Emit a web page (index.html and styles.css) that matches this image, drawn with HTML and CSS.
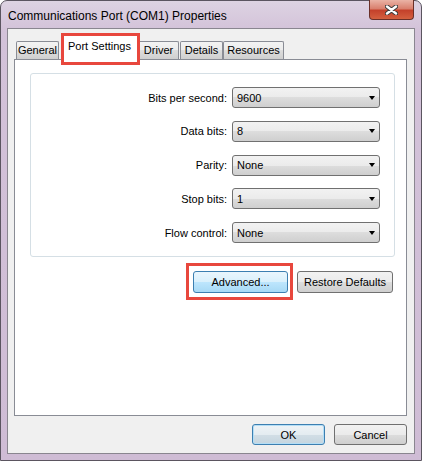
FILE: index.html
```html
<!doctype html>
<html>
<head>
<meta charset="utf-8">
<title>Communications Port (COM1) Properties</title>
<link rel="stylesheet" href="styles.css">
</head>
<body>
<div class="window">
	<div class="titlebar">
		<span class="title">Communications Port (COM1) Properties</span>
		<span class="close">
			<svg width="13" height="10" viewBox="0 0 13 10">
				<path d="M2 1.5L11 8.5M11 1.5L2 8.5" stroke="#3b3b3b" stroke-width="4.4" stroke-linecap="round"/>
				<path d="M2 1.5L11 8.5M11 1.5L2 8.5" stroke="#fff" stroke-width="2.4" stroke-linecap="round"/>
			</svg>
		</span>
	</div>
	<div class="client">
		<div class="tabs">
			<span class="tab tab-general">General</span>
			<span class="tab tab-active marked">Port Settings</span>
			<span class="tab tab-driver">Driver</span>
			<span class="tab tab-details">Details</span>
			<span class="tab tab-resources">Resources</span>
		</div>
		<div class="panel">
			<div class="group">
				<div class="row"><label>Bits per second:</label><div class="combo"><span>9600</span><i class="arrow"></i></div></div>
				<div class="row"><label>Data bits:</label><div class="combo"><span>8</span><i class="arrow"></i></div></div>
				<div class="row"><label>Parity:</label><div class="combo"><span>None</span><i class="arrow"></i></div></div>
				<div class="row"><label>Stop bits:</label><div class="combo"><span>1</span><i class="arrow"></i></div></div>
				<div class="row"><label>Flow control:</label><div class="combo"><span>None</span><i class="arrow"></i></div></div>
			</div>
			<div class="actions">
				<span class="btn btn-hot btn-advanced marked">Advanced...</span>
				<span class="btn btn-restore">Restore Defaults</span>
			</div>
		</div>
		<div class="footer">
			<span class="btn btn-default btn-small">OK</span>
			<span class="btn btn-small">Cancel</span>
		</div>
	</div>
</div>
</body>
</html>
```
FILE: styles.css
```css
body{margin:0;background:#fff;font-family:"Liberation Sans",Arial,sans-serif;font-size:11px;color:#000;}
.window{width:422px;height:461px;box-sizing:border-box;display:flex;flex-direction:column;padding:0 6px 6px 6px;border:1px solid #5b5560;border-radius:7px 7px 0 0;background:linear-gradient(#ddd3e2,#d3c2d9 30px,#cfbcd5);}

.titlebar{height:27px;display:flex;align-items:flex-start;flex-shrink:0;}
.title{font-size:12px;line-height:15px;padding:8px 0 0 1px;color:#000;}
.close{margin:-1px 1px 0 auto;width:45px;height:20px;box-sizing:border-box;display:flex;align-items:center;justify-content:center;border:1px solid #6a3028;border-top:none;border-radius:0 0 4px 4px;background:linear-gradient(#eab3a6,#d9806e 45%,#c4412b 55%,#d4603f);}

.client{flex:1;display:flex;flex-direction:column;padding:0 7px 0 6px;border:1px solid #8a8690;background:#f0f0f0;}

.tabs{height:30px;display:flex;align-items:flex-end;padding-left:2px;flex-shrink:0;}
.tab{height:18px;box-sizing:border-box;padding-top:1px;line-height:14px;text-align:center;border:1px solid #898c95;border-bottom:none;border-radius:2px 2px 0 0;background:linear-gradient(#f3f3f3,#ebebeb 50%,#dddddd 50%,#cfcfcf);}
.tab-general{width:43px;margin-right:2px;}
.tab-active{width:77px;height:26px;padding-top:4px;margin-bottom:-1px;position:relative;z-index:1;background:#fff;}
.tab-driver{width:41px;margin-right:1px;}
.tab-details{width:43px;}
.tab-resources{width:61px;}

.marked{position:relative;}
.marked::after{content:"";position:absolute;border:3px solid #e8473d;pointer-events:none;}
.tab-active::after{top:-2px;left:-1px;right:-3px;bottom:-5px;}
.btn-advanced::after{top:-9px;left:-8px;right:-6px;bottom:-8px;}

.panel{height:357px;box-sizing:border-box;flex-shrink:0;padding:13px 11px 0 15px;border:1px solid #898c95;background:#fff;}
.group{display:flex;flex-direction:column;gap:12.75px;padding:13px 14px 13px;border:1px solid #d5dfe5;border-radius:3px;}
.row{display:flex;justify-content:flex-end;align-items:center;gap:5px;}
.combo{width:148px;height:21px;box-sizing:border-box;display:flex;align-items:center;padding:0 4px 0 4px;border:1px solid #707070;border-radius:3px;background:linear-gradient(#f2f2f2,#ebebeb 50%,#dddddd 50%,#cfcfcf);}
.combo span{flex:1;}
.arrow{width:0;height:0;border-left:3.5px solid transparent;border-right:3.5px solid transparent;border-top:4px solid #000;}

.actions{display:flex;justify-content:flex-end;gap:9px;margin:14px 2px 0 0;}
.btn{height:22px;box-sizing:border-box;display:flex;align-items:center;justify-content:center;border:1px solid #707070;border-radius:3px;background:linear-gradient(#f2f2f2,#ebebeb 50%,#dddddd 50%,#cfcfcf);}
.btn-advanced{width:95px;}
.btn-restore{width:96px;}
.btn-hot{border-color:#3c7fb1;background:linear-gradient(#eaf6fd,#d9f0fc 50%,#bee6fd 50%,#a7d9f5);}

.footer{display:flex;justify-content:flex-end;gap:9px;margin-top:8px;}
.btn-small{width:73px;height:21px;}
.btn-default{border-color:#3c7fb1;box-shadow:inset 0 0 0 1px #b4def6;background:linear-gradient(#eef3f6,#e4ecf1 50%,#d2dee6 50%,#c5d5df);}
```
